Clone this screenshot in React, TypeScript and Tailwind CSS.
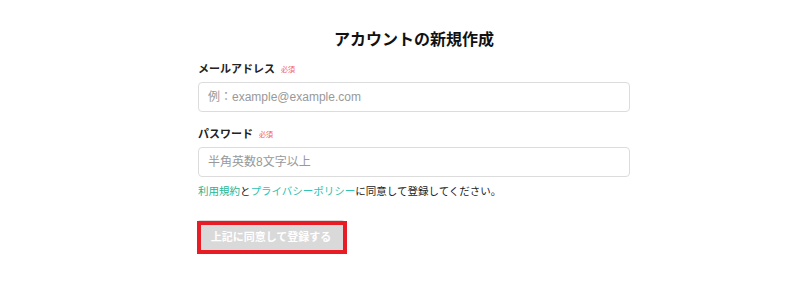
const Field = ({ label, placeholder, type }: { label: string; placeholder: string; type: string }) => (
  <div>
    <div className="flex items-center gap-[6px] h-[18px]">
      <span className="text-[11px] font-bold text-[#222]">{label}</span>
      <span className="text-[7px] text-[#f25b6a] mt-[2px]">必須</span>
    </div>
    <input
      type={type}
      placeholder={placeholder}
      className="mt-[5px] block w-full h-[30px] rounded-[4px] border border-[#dcdcdc] bg-white px-[9px] text-[12px] text-[#333] placeholder:text-[#999] outline-none font-['Liberation_Sans','Noto_Sans_CJK_JP',sans-serif]"
    />
  </div>
);

export default function App() {
  return (
    <div
      className="w-[800px] h-[302px] bg-white"
      style={{ fontFamily: '"Noto Sans CJK JP", "Noto Sans", sans-serif' }}
    >
      <div className="ml-[198px] w-[432px] pt-[26px]">
        <h1 className="text-center text-[16px] leading-[24px] font-bold text-[#111]">アカウントの新規作成</h1>
        <div className="mt-[9px]">
          <Field label="メールアドレス" placeholder="例：example@example.com" type="email" />
        </div>
        <div className="mt-[12px]">
          <Field label="パスワード" placeholder="半角英数8文字以上" type="password" />
        </div>
        <p className="mt-[5px] text-[10.5px] leading-[18px] text-[#222]">
          <a className="text-[#22b795]">利用規約</a>と<a className="text-[#2fc3b4]">プライバシーポリシー</a>に同意して登録してください。
        </p>
        <div className="relative mt-[20px] w-[146px]">
          <button
            type="button"
            className="block w-[146px] h-[32px] rounded-[2px] bg-[#d9d9d9] text-[11px] font-bold text-white"
          >
            上記に同意して登録する
          </button>
          <div className="absolute left-[-1px] top-[1px] w-[150px] h-[33px] border-[4px] border-[#e81c24]" />
        </div>
      </div>
    </div>
  );
}
